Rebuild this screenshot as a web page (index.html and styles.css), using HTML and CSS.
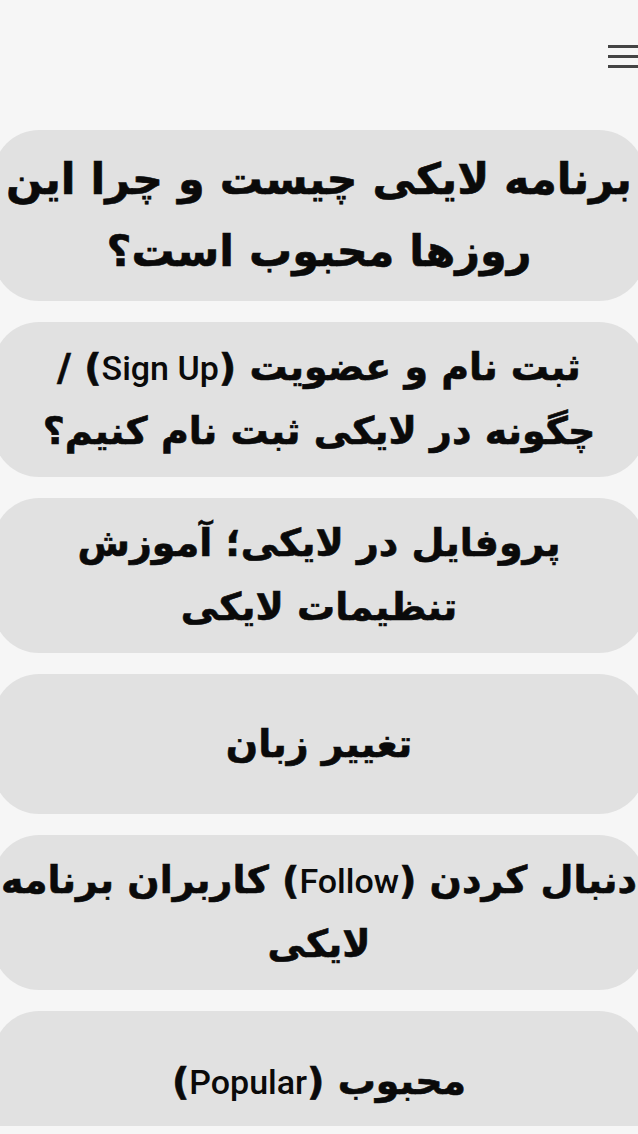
FILE: index.html
```html
<!DOCTYPE html>
<html lang="fa" dir="rtl">
<head>
<meta charset="utf-8">
<title>لایکی</title>
<link rel="stylesheet" href="styles.css">
</head>
<body>
<header class="top">
  <button class="menu" aria-label="منو">
    <svg width="30" height="24" viewBox="0 0 30 24" aria-hidden="true">
      <rect x="0" y="1" width="30" height="3" fill="#444"/>
      <rect x="0" y="11" width="30" height="3" fill="#444"/>
      <rect x="0" y="21" width="30" height="3" fill="#444"/>
    </svg>
  </button>
</header>
<main class="list">
  <a class="card card-lead" href="#">
    <span class="ln">برنامه لایکی چیست و چرا این</span>
    <span class="ln">روزها محبوب است؟</span>
  </a>
  <a class="card" href="#">
    <span class="ln">ثبت نام و عضویت (<span class="lat">Sign Up</span>) /</span>
    <span class="ln">چگونه در لایکی ثبت نام کنیم؟</span>
  </a>
  <a class="card" href="#">
    <span class="ln">پروفایل در لایکی؛ آموزش</span>
    <span class="ln">تنظیمات لایکی</span>
  </a>
  <a class="card" href="#">
    <span class="ln">تغییر زبان</span>
  </a>
  <a class="card" href="#">
    <span class="ln">دنبال کردن (<span class="lat">Follow</span>) کاربران برنامه</span>
    <span class="ln">لایکی</span>
  </a>
  <a class="card" href="#">
    <span class="ln">محبوب (<span class="lat">Popular</span>)</span>
  </a>
</main>
<div class="bottom-strip"></div>
</body>
</html>
```

FILE: styles.css
```css
html, body {
  margin: 0;
  padding: 0;
  background: #f6f6f6;
  overflow-x: hidden;
}

body {
  font-family: "DejaVu Sans", "Noto Sans", sans-serif;
  color: #0a0a0a;
}

.top {
  height: 130px;
  box-sizing: border-box;
  padding-top: 44px;
  display: flex;
  justify-content: flex-start;
}

.menu {
  border: 0;
  background: none;
  padding: 0;
  margin: 0;
  width: 30px;
  height: 24px;
  display: block;
  cursor: pointer;
}

.menu svg {
  display: block;
}

.list {
  display: flex;
  flex-direction: column;
  gap: 21px;
  margin: 0 -7px;
}

.card {
  display: flex;
  flex-direction: column;
  align-items: center;
  justify-content: center;
  min-height: 140px;
  box-sizing: border-box;
  padding: 13px 0 14px;
  background: #e1e1e1;
  border-radius: 46px;
  text-decoration: none;
  color: #0a0a0a;
  font-weight: 700;
  font-size: 38px;
  line-height: 64px;
  -webkit-text-stroke: 0.6px #0a0a0a;
}

.card-lead {
  font-size: 43px;
  line-height: 72px;
}

.ln {
  white-space: nowrap;
  height: 64px;
}

.card-lead .ln {
  height: 72px;
}

.lat {
  font-family: Roboto, "Liberation Sans", sans-serif;
  font-weight: 500;
  font-size: 34px;
  line-height: 1;
  -webkit-text-stroke: 0;
}

.bottom-strip {
  position: fixed;
  left: 0;
  right: 0;
  bottom: 0;
  height: 8px;
  background: #f6f6f6;
}
```
